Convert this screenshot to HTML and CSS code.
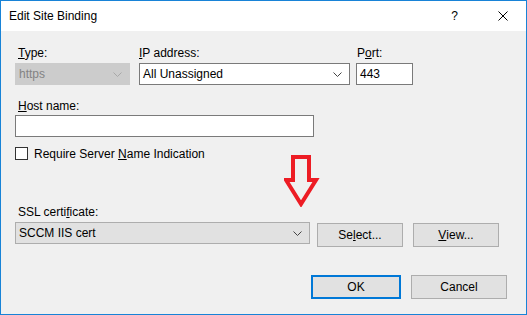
FILE: index.html
```html
<!DOCTYPE html>
<html lang="en">
<head>
    <meta charset="UTF-8">
    <title>Edit Site Binding</title>
    <link rel="stylesheet" href="styles.css">
</head>
<body>
    <div class="dialog">
        <div class="title-bar">
            <span class="title">Edit Site Binding</span>
            <span class="help">?</span>
            <svg class="close" width="10" height="10" viewBox="0 0 10 10">
                <path d="M0.5 0.5 L9.5 9.5 M9.5 0.5 L0.5 9.5" stroke="#000" stroke-width="1" fill="none"/>
            </svg>
        </div>

        <div class="content">
            <div class="row-top">
                <div class="field type-field">
                    <label><u>T</u>ype:</label>
                    <div class="combo disabled">
                        <span>https</span>
                        <svg class="chevron" width="9" height="5" viewBox="0 0 9 5"><path d="M0.5 0.5 L4.5 4.5 L8.5 0.5" stroke="#a8a8a8" fill="none"/></svg>
                    </div>
                </div>
                <div class="field ip-field">
                    <label><u>I</u>P address:</label>
                    <div class="combo">
                        <span>All Unassigned</span>
                        <svg class="chevron" width="9" height="5" viewBox="0 0 9 5"><path d="M0.5 0.5 L4.5 4.5 L8.5 0.5" stroke="#444" fill="none"/></svg>
                    </div>
                </div>
                <div class="field port-field">
                    <label>P<u>o</u>rt:</label>
                    <div class="textbox">443</div>
                </div>
            </div>

            <div class="field host-field">
                <label><u>H</u>ost name:</label>
                <div class="textbox"></div>
            </div>

            <div class="check-row">
                <span class="checkbox"></span>
                <span>Require Server <u>N</u>ame Indication</span>
            </div>

            <div class="ssl-block">
                <label>SSL certi<u>f</u>icate:</label>
                <div class="ssl-row">
                    <div class="combo gray">
                        <span>SCCM IIS cert</span>
                        <svg class="chevron" width="9" height="5" viewBox="0 0 9 5"><path d="M0.5 0.5 L4.5 4.5 L8.5 0.5" stroke="#444" fill="none"/></svg>
                    </div>
                    <div class="btn select-btn">Se<u>l</u>ect...</div>
                    <div class="btn view-btn"><u>V</u>iew...</div>
                </div>
            </div>

            <div class="footer">
                <div class="btn ok-btn">OK</div>
                <div class="btn cancel-btn">Cancel</div>
            </div>

            <!-- red annotation arrow -->
            <svg class="arrow" width="36" height="52" viewBox="0 0 36 52">
                <path d="M9 2 L25 2 L25 25 L32 25 L17 49 L2 25 L9 25 Z" stroke="#ed1c24" stroke-width="4" fill="none" stroke-linejoin="miter"/>
            </svg>
        </div>
    </div>
</body>
</html>
```

FILE: styles.css
```css
html, body {
    margin: 0;
    padding: 0;
}

body {
    font-family: "Liberation Sans", Arial, sans-serif;
    font-size: 12px;
    color: #000;
    background: #f0f0f0;
}

.dialog {
    width: 527px;
    height: 315px;
    box-sizing: border-box;
    border: 1px solid #1883d7;
    background: #f0f0f0;
    display: flex;
    flex-direction: column;
}

.title-bar {
    height: 30px;
    background: #fff;
    display: flex;
    align-items: center;
    padding-left: 8px;
}

.title {
    flex: 1;
}

.help {
    margin-right: 40px;
}

.close {
    margin-right: 18px;
}

.content {
    position: relative;
    flex: 1;
    padding: 14px 19px 0 14px;
}

label {
    display: block;
    line-height: 16px;
    padding-left: 3px;
    margin-bottom: 2px;
}

.row-top {
    display: flex;
}

.type-field {
    width: 115px;
    margin-right: 9px;
}

.ip-field {
    width: 211px;
    margin-right: 6px;
}

.ip-field label {
    padding-left: 0;
}

.port-field {
    width: 57px;
}

.port-field label {
    padding-left: 1px;
}

.combo, .textbox {
    height: 22px;
    box-sizing: border-box;
    border: 1px solid #7a7a7a;
    background: #fff;
    display: flex;
    align-items: center;
    padding: 0 3px;
}

.combo span {
    flex: 1;
}

.chevron {
    margin-right: 4px;
}

.combo.disabled {
    background: #cccccc;
    border-color: #cccccc;
    color: #838383;
}

.combo.gray {
    background: #e1e1e1;
    border-color: #adadad;
}

.host-field {
    margin-top: 13px;
    width: 299px;
}

.host-field label {
    margin-bottom: 1px;
}

.check-row {
    margin-top: 10px;
    display: flex;
    align-items: center;
    height: 13px;
}

.checkbox {
    width: 13px;
    height: 13px;
    box-sizing: border-box;
    border: 1px solid #333;
    background: #fff;
    margin-right: 6px;
}

.ssl-block {
    margin-top: 44px;
}

.ssl-row {
    display: flex;
    align-items: flex-start;
}

.ssl-row .combo {
    width: 295px;
    margin-right: 7px;
}

.btn {
    box-sizing: border-box;
    height: 24px;
    border: 1px solid #adadad;
    background: #e1e1e1;
    display: flex;
    align-items: center;
    justify-content: center;
}

.select-btn {
    width: 86px;
    margin-top: 1px;
    margin-right: 10px;
}

.view-btn {
    width: 86px;
    margin-top: 1px;
}

.footer {
    margin-top: 28px;
    display: flex;
    justify-content: flex-end;
}

.ok-btn {
    width: 90px;
    border: 2px solid #0078d7;
    margin-right: 10px;
}

.cancel-btn {
    width: 96px;
}

.arrow {
    position: absolute;
    left: 283px;
    top: 124px;
}
```
